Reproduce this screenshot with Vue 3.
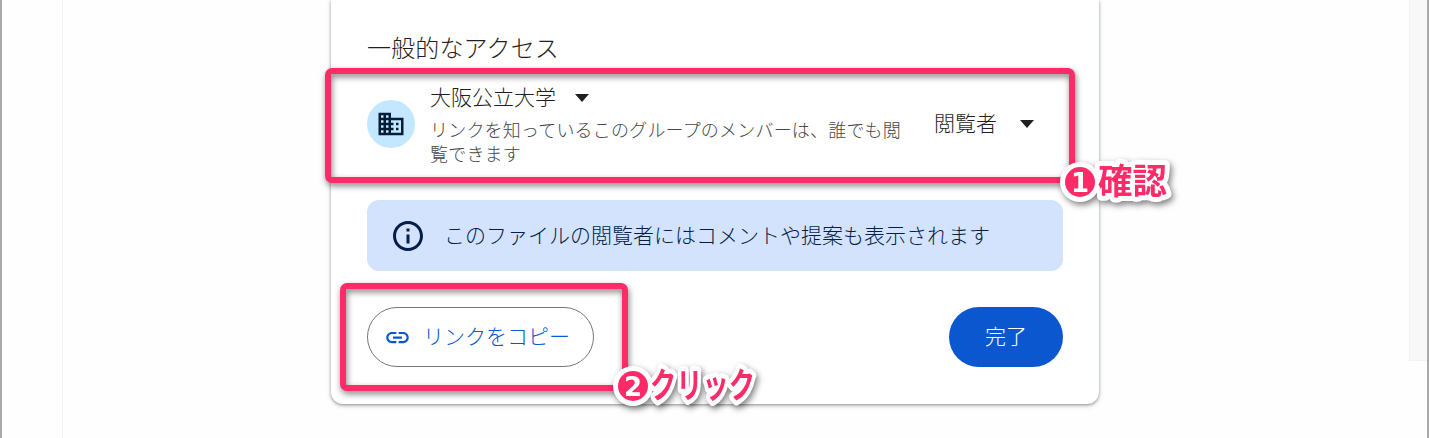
<script setup>
const notes = [
  { id: 'confirm', digit: '1', label: '確認', x: 38, width: 69, size: 35 },
  { id: 'click', digit: '2', label: 'クリック', x: 37, width: 105, size: 35 },
]
</script>

<template>
  <div class="page">
    <div class="left-rule"></div>
    <div class="side-strip"></div>
    <main class="dialog">
      <h2>一般的なアクセス</h2>
      <section class="access">
        <div class="avatar">
          <svg width="30" height="30" viewBox="0 0 24 24" fill="#041e36">
            <path d="M12 7V3H2v18h20V7H12zM6 19H4v-2h2v2zm0-4H4v-2h2v2zm0-4H4V9h2v2zm0-4H4V5h2v2zm4 12H8v-2h2v2zm0-4H8v-2h2v2zm0-4H8V9h2v2zm0-4H8V5h2v2zm10 12h-8v-2h2v-2h-2v-2h2v-2h-2V9h8v10zm-2-8h-2v2h2v-2zm0 4h-2v2h2v-2z" />
          </svg>
        </div>
        <div class="group">
          <div class="name">大阪公立大学<i class="caret"></i></div>
          <p>リンクを知っているこのグループのメンバーは、誰でも閲<br>覧できます</p>
        </div>
        <div class="role">閲覧者<i class="caret"></i></div>
      </section>
      <div class="info">
        <svg width="36" height="36" viewBox="0 0 24 24" fill="#041e49">
          <path d="M11 7h2v2h-2zm0 4h2v6h-2zm1-9C6.48 2 2 6.48 2 12s4.48 10 10 10 10-4.48 10-10S17.52 2 12 2zm0 18c-4.41 0-8-3.59-8-8s3.59-8 8-8 8 3.59 8 8-3.59 8-8 8z" />
        </svg>
        <span>このファイルの閲覧者にはコメントや提案も表示されます</span>
      </div>
      <footer>
        <button class="copy">
          <svg width="27" height="27" viewBox="0 0 24 24" fill="#0b57d0">
            <path d="M3.9 12c0-1.71 1.39-3.1 3.1-3.1h4V7H7c-2.76 0-5 2.24-5 5s2.24 5 5 5h4v-1.9H7c-1.71 0-3.1-1.39-3.1-3.1zM8 13h8v-2H8v2zm9-6h-4v1.9h4c1.71 0 3.1 1.39 3.1 3.1s-1.39 3.1-3.1 3.1h-4V17h4c2.76 0 5-2.24 5-5s-2.24-5-5-5z" />
          </svg>
          <span>リンクをコピー</span>
        </button>
        <button class="done">完了</button>
      </footer>
    </main>

    <div class="frame frame-access"></div>
    <div class="frame frame-copy"></div>
    <svg v-for="n in notes" :key="n.id" :class="['note', n.id]" width="170" height="60" viewBox="-10 -10 170 60">
      <circle cx="20" cy="20" r="20" fill="#fff" />
      <text class="outline" :x="n.x" y="32" :font-size="n.size" :textLength="n.width" lengthAdjust="spacingAndGlyphs">{{ n.label }}</text>
      <circle cx="20" cy="20" r="15" fill="#ff2a68" />
      <text class="digit" x="20" y="29.5" text-anchor="middle">{{ n.digit }}</text>
    </svg>
  </div>
</template>

<style>
body { margin: 0; background: #fff; }
</style>

<style scoped>
* { box-sizing: border-box; }
.page {
  position: relative;
  width: 1429px;
  height: 438px;
  overflow: hidden;
  background: #fefefe;
  border: solid #a9a9a9;
  border-width: 0 2px;
  font-family: "Noto Sans CJK JP", sans-serif;
  font-weight: 300;
  color: #1f1f1f;
}
.left-rule { position: absolute; left: 60px; top: 0; width: 1px; height: 438px; background: #f1f1f1; }
.side-strip { position: absolute; right: 0; top: 0; width: 18px; height: 361px; background: #f8f8f8; border: 1px solid #f2f2f2; border-top: 0; border-right: 0; }
.dialog {
  width: 768px;
  height: 404px;
  margin-left: 329px;
  padding: 29px 36px 0;
  background: #fff;
  border-radius: 0 0 12px 12px;
  box-shadow: 0 1px 3px rgba(60, 64, 67, .45), 0 2px 5px rgba(60, 64, 67, .2);
}
h2 { margin: 0; height: 39px; font-size: 24px; line-height: 36px; font-weight: 300; letter-spacing: .15px; }
.access { display: flex; height: 132px; padding-top: 11px; }
.avatar { display: flex; align-items: center; justify-content: center; width: 48px; height: 48px; margin-top: 21px; border-radius: 50%; background: #c2e7ff; }
.group { width: 504px; margin-left: 15px; }
.name { display: flex; align-items: center; height: 34px; font-size: 21px; }
.caret { margin-top: 4px; margin-left: 19px; border: solid transparent; border-width: 8px 7.5px 0; border-top-color: #1f1f1f; }
p { margin: 4px 0 0; font-size: 18px; line-height: 24px; letter-spacing: .19px; white-space: nowrap; color: #444746; }
.role { display: flex; align-items: center; height: 34px; margin-top: 26px; font-size: 21px; }
.role .caret { margin-left: 23px; }
.info { display: flex; align-items: center; height: 71px; padding-left: 23px; gap: 18px; border-radius: 12px; background: #d3e3fd; color: #041e49; font-size: 21px; white-space: nowrap; }
.info span { padding-bottom: 4px; }
footer { display: flex; justify-content: space-between; margin-top: 36px; }
button { height: 60px; margin: 0; font: inherit; font-size: 21px; border-radius: 30px; white-space: nowrap; }
.copy { display: flex; align-items: center; width: 227px; padding: 0 0 0 16px; gap: 12px; border: 1px solid #747775; background: #fff; color: #0b57d0; }
.copy span { padding-bottom: 4px; }
.done { width: 114px; padding: 0 0 4px; border: 0; background: #0b57d0; color: #fff; }
.frame { position: absolute; border: 6px solid #ff2a68; border-radius: 7px; filter: drop-shadow(1px 3px 3px rgba(0, 0, 0, .5)); }
.frame-access { left: 323px; top: 68px; width: 750px; height: 115px; }
.frame-copy { left: 338px; top: 283px; width: 288px; height: 108px; }
.note { position: absolute; overflow: visible; filter: drop-shadow(2px 3px 3px rgba(0, 0, 0, .5)); }
.confirm { left: 1048px; top: 152px; }
.click { left: 601px; top: 356px; }
.outline { font-weight: 700; fill: #ff2a68; stroke: #fff; stroke-width: 10px; stroke-linejoin: round; paint-order: stroke fill; }
.digit { font-family: "DejaVu Sans", sans-serif; font-size: 26px; font-weight: 700; fill: #fff; }
</style>
